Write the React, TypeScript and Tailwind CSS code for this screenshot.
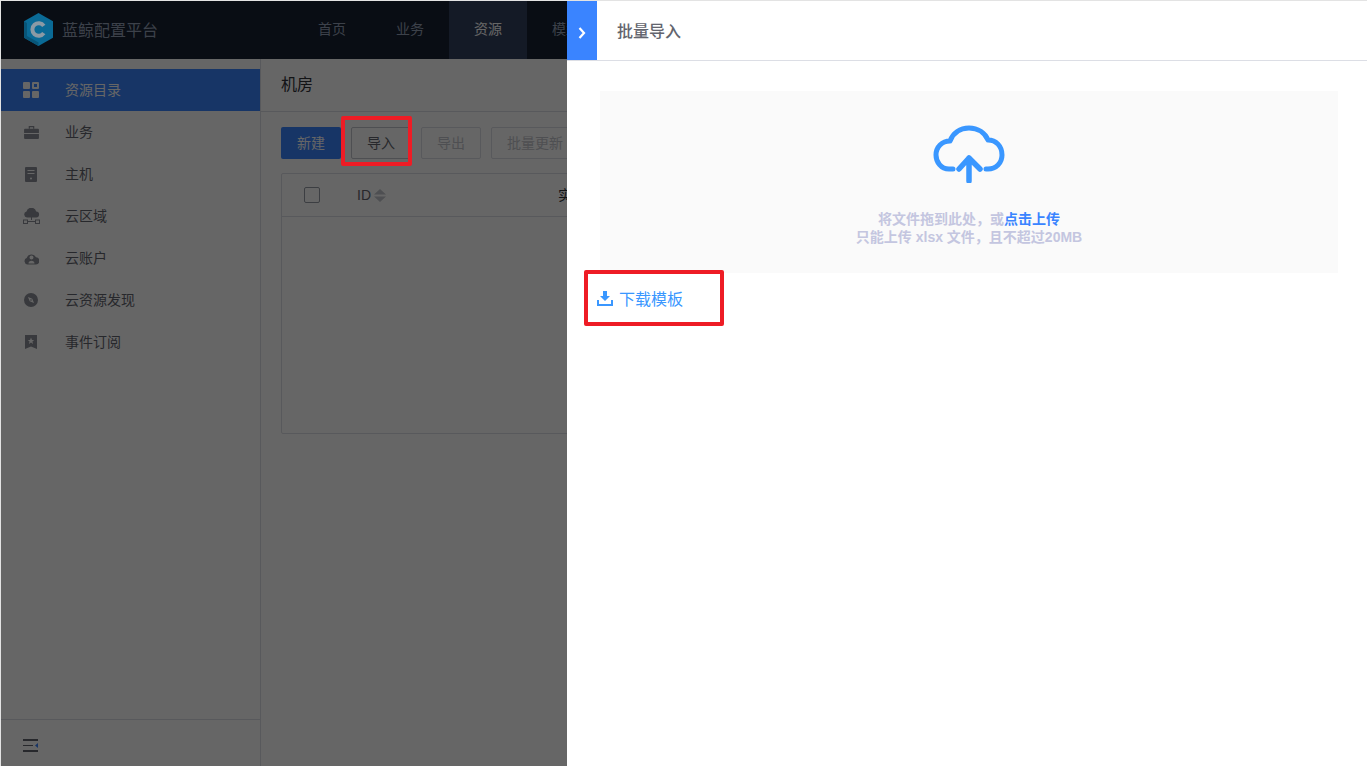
import React from "react";

const FONT = "font-['Liberation_Sans','Noto_Sans_CJK_SC',sans-serif]";

// Sidebar icons, 16x16 unless noted
const GridIcon = () => (
  <svg width="16" height="16" viewBox="0 0 16 16" fill="currentColor">
    <rect x="0" y="0" width="7" height="7" rx="1" />
    <path fillRule="evenodd" d="M10 0h5a1 1 0 0 1 1 1v5a1 1 0 0 1-1 1h-5a1 1 0 0 1-1-1V1a1 1 0 0 1 1-1zm1 2v3h3V2z" />
    <rect x="0" y="9" width="7" height="7" rx="1" />
    <rect x="9" y="9" width="7" height="7" rx="1" />
  </svg>
);

const BriefcaseIcon = () => (
  <svg width="15" height="13" viewBox="0 0 16 14" fill="currentColor">
    <path d="M5 0h6v3h-1.300V1.300H6.300V3H5z" />
    <path d="M1 3h14a1 1 0 0 1 1 1v3.500H0V4a1 1 0 0 1 1-1z" />
    <path d="M0 8.500h16V13a1 1 0 0 1-1 1H1a1 1 0 0 1-1-1z" />
  </svg>
);

const HostIcon = () => (
  <svg width="12" height="15" viewBox="0 0 12 15" fill="currentColor">
    <path fillRule="evenodd" d="M1 0h10a1 1 0 0 1 1 1v13a1 1 0 0 1-1 1H1a1 1 0 0 1-1-1V1a1 1 0 0 1 1-1zm1.500 3v1h7V3zm0 3v1h7V6zM6 10.500a1 1 0 1 0 0 2 1 1 0 0 0 0-2z" />
  </svg>
);

const CloudAreaIcon = () => (
  <svg width="17" height="17" viewBox="0 0 17 17" fill="currentColor">
    <path d="M4 9.500a3 3 0 0 1-.5-5.900A5 5 0 0 1 13.200 3.500 3 3 0 0 1 13 9.500z" />
    <rect x="8" y="9" width="1" height="3" />
    <rect x="4" y="13" width="9" height="1" />
    <path fillRule="evenodd" d="M0 11.500h5v4.500H0zm1 1V15h3v-2.500zM12 11.500h5v4.500h-5zm1 1V15h3v-2.500z" />
  </svg>
);

const CloudUserIcon = () => (
  <svg width="15" height="13" viewBox="0 0 15 13" fill="currentColor">
    <path fillRule="evenodd" d="M3.500 12.500a3.300 3.300 0 0 1-.8-6.400A5 5 0 0 1 12 5.300a3.600 3.600 0 0 1-.5 7.200zM7.500 3.500a2 2 0 1 0 0 4 2 2 0 0 0 0-4zM4.500 11.500c0-1.600 1.300-2.700 3-2.700s3 1.100 3 2.700z" />
  </svg>
);

const CompassIcon = () => (
  <svg width="14" height="14" viewBox="0 0 14 14" fill="currentColor">
    <path fillRule="evenodd" d="M7 0a7 7 0 1 1 0 14A7 7 0 0 1 7 0zM4 4l1.700 4.300L10 10 8.300 5.700zm3 2.200a.8.8 0 1 1 0 1.600.8.8 0 0 1 0-1.600z" />
  </svg>
);

const BookmarkIcon = () => (
  <svg width="12" height="14" viewBox="0 0 12 14" fill="currentColor">
    <path fillRule="evenodd" d="M0 0h12v14l-6-2.500L0 14zM6 2.500 5 5H2.800l1.800 1.500-.7 2.400L6 7.500l2.100 1.400-.7-2.400L9.200 5H7z" />
  </svg>
);

const Logo = () => (
  <svg width="29" height="33" viewBox="0 0 29 33">
    <path d="M14.500 0 29 8.200v16.600L14.500 33 0 24.800V8.200z" fill="#0a6a96" />
    <path d="M14.500 33 0 24.800V8.200l3 1.700v13.200l11.500 6.500z" fill="#085578" />
    <path
      d="M19.800 12.800a6.300 6.300 0 1 0 0 7.400"
      fill="none"
      stroke="#8b9aa5"
      strokeWidth="4"
    />
  </svg>
);

const menu = [
  { label: "资源目录", icon: <GridIcon />, active: true },
  { label: "业务", icon: <BriefcaseIcon /> },
  { label: "主机", icon: <HostIcon /> },
  { label: "云区域", icon: <CloudAreaIcon /> },
  { label: "云账户", icon: <CloudUserIcon /> },
  { label: "云资源发现", icon: <CompassIcon /> },
  { label: "事件订阅", icon: <BookmarkIcon /> },
];

const nav = ["首页", "业务", "资源", "模型"];

export default function App() {
  return (
    <div className={`relative h-[766px] w-[1367px] overflow-hidden bg-white ${FONT}`}>
      {/* Page behind the mask */}
      <div className="flex h-[766px] flex-col">
        <header className="flex h-[59px] shrink-0 items-center bg-[#182132]">
          <div className="ml-[24px] flex w-[269px] items-center gap-[9px]">
            <span className="relative z-10 flex">
              <Logo />
            </span>
            <span className="mt-[2px] text-[16px] text-[#96a2b9]">蓝鲸配置平台</span>
          </div>
          <nav className="flex h-full">
            {nav.map((item) => (
              <div
                key={item}
                className={
                  item === "资源"
                    ? "flex w-[78px] items-center justify-center bg-[#344260] text-[14px] text-white"
                    : "flex w-[78px] items-center justify-center text-[14px] text-[#96a2b9]"
                }
              >
                {item}
              </div>
            ))}
          </nav>
        </header>

        <div className="flex min-h-0 flex-1">
          <aside className="flex w-[261px] shrink-0 flex-col border-r border-[#dcdee5] bg-white">
            <ul className="flex-1 pt-[10px]">
              {menu.map((m) => (
                <li
                  key={m.label}
                  className={
                    m.active
                      ? "flex h-[42px] items-center bg-[#3a84ff] text-[14px] text-white"
                      : "flex h-[42px] items-center text-[14px] text-[#63656e]"
                  }
                >
                  <span
                    className={
                      m.active
                        ? "flex w-[65px] justify-center pr-[3px] text-white"
                        : "flex w-[65px] justify-center pr-[3px] text-[#8c8f98]"
                    }
                  >
                    {m.icon}
                  </span>
                  {m.label}
                </li>
              ))}
            </ul>
            <div className="flex h-[47px] items-center border-t border-[#dcdee5] pl-[23px] pt-[6px]">
              <svg width="15" height="14" viewBox="0 0 15 14" fill="#63656e">
                <rect x="0" y="0" width="15" height="2" />
                <rect x="0" y="6" width="10" height="1" />
                <path d="M15 4v5l-3-2.500z" fill="#3a84ff" />
                <rect x="0" y="11" width="15" height="2" />
              </svg>
            </div>
          </aside>

          <main className="min-w-0 flex-1 bg-white">
            <div className="flex h-[53px] items-center border-b border-[#dcdee5] pl-[20px] text-[16px] text-[#313238]">
              机房
            </div>
            <div className="flex gap-[10px] pl-[20px] pt-[15px]">
              <button className="h-[32px] w-[60px] rounded-[2px] bg-[#3a84ff] text-[14px] text-white">新建</button>
              <button className="h-[32px] w-[60px] rounded-[2px] border border-[#c4c6cc] text-[14px] text-[#63656e]">导入</button>
              <button className="h-[32px] w-[60px] rounded-[2px] border border-[#dcdee5] text-[14px] text-[#c4c6cc]">导出</button>
              <button className="h-[32px] w-[88px] shrink-0 rounded-[2px] border border-[#dcdee5] text-[14px] text-[#c4c6cc]">批量更新</button>
            </div>
            <div className="ml-[20px] mt-[14px] h-[261px] rounded-[2px] border border-[#dcdee5]">
              <div className="flex h-[43px] items-center border-b border-[#dcdee5] text-[14px] text-[#313238]">
                <span className="ml-[22px] h-[16px] w-[16px] rounded-[2px] border border-[#979ba5] bg-white" />
                <span className="ml-[37px] text-[14px] text-[#63656e]">ID</span>
                <svg className="ml-[3px]" width="12" height="13" viewBox="0 0 12 13" fill="#c4c6cc">
                  <path d="M6 0l6 5.500H0zM6 13 0 7.500h12z" />
                </svg>
                <span className="ml-[172px]">实例名</span>
              </div>
            </div>
          </main>
        </div>
      </div>

      {/* Mask */}
      <div className="absolute inset-0 bg-black/60" />

      {/* Annotation behind the drawer */}
      <div className="absolute left-[341px] top-[116px] h-[50px] w-[71px] rounded-[2px] border-[4px] border-[#ee1c25]" />

      {/* Import drawer */}
      <section className="absolute bottom-0 left-[567px] right-0 top-0 bg-white">
        <div className="flex h-[61px] border-b border-[#dcdee5]">
          <div className="flex w-[30px] items-center justify-center bg-[#3a84ff]">
            <svg className="mt-[6px]" width="8" height="12" viewBox="0 0 8 12" fill="none" stroke="white" strokeWidth="2.200">
              <path d="M1.500 1 6 6l-4.500 5" />
            </svg>
          </div>
          <h2 className="ml-[20px] mt-[4px] self-center text-[16px] font-medium text-[#63656e]">批量导入</h2>
        </div>
        <div className="ml-[33px] mt-[30px] flex h-[182px] w-[738px] flex-col items-center bg-[#fafafa] pt-[34px]">
          <svg width="72" height="58" viewBox="0 0 72 58" fill="none" stroke="#3a97ff" strokeWidth="5" strokeLinecap="round" strokeLinejoin="round">
            <path d="M20 44H16C8 44 3 37 3 30 3 22 9 16 17 16 20 8 27 3 36 3 45 3 52 8 55 15 63 15 69 21 69 30 69 38 63 44 55 44H53" />
            <path d="M36 56V33M26 44 36 33 47 44" strokeWidth="5.500" />
          </svg>
          <p className="mt-[27px] text-[14px] font-bold leading-[18px] text-[#c4c6e0]">
            将文件拖到此处，或<span className="text-[#3a84ff]">点击上传</span>
          </p>
          <p className="text-[14px] font-bold leading-[18px] text-[#c4c6e0]">只能上传 xlsx 文件，且不超过20MB</p>
        </div>
        <a className="ml-[30px] mt-[15px] flex items-center gap-[6px] text-[16px] leading-[24px] text-[#3a97ff]">
          <svg className="mb-[4px]" width="16" height="15" viewBox="0 0 16 15" fill="#3a97ff">
            <path d="M6 0h4v5h3L8 10 3 5h3z" />
            <path d="M0 9h2v4h12V9h2v6H0z" />
          </svg>
          下载模板
        </a>
      </section>

      {/* Annotation on the drawer */}
      <div className="absolute left-[584px] top-[270px] h-[56px] w-[140px] rounded-[2px] border-[4px] border-[#ee1c25]" />

      {/* Screenshot edge */}
      <div className="pointer-events-none absolute inset-0 border-l border-t border-[#e3e3e3]" />
    </div>
  );
}
